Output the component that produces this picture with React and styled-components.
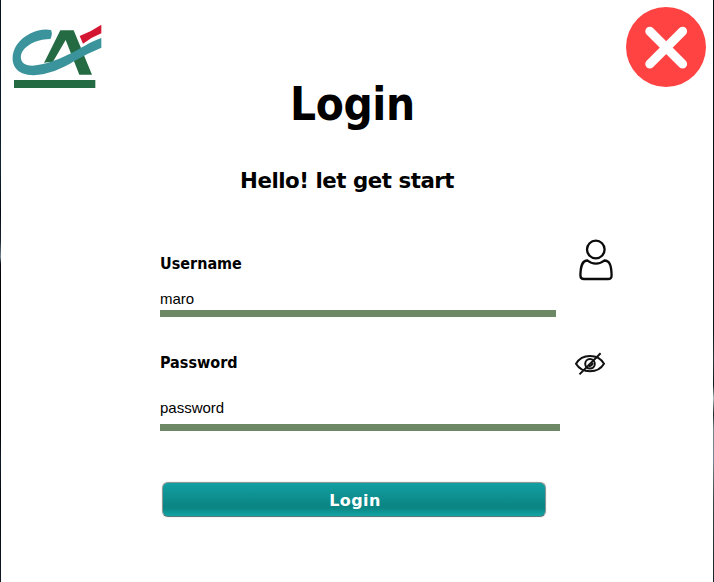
import React from "react";
import styled, { createGlobalStyle } from "styled-components";

const GlobalStyle = createGlobalStyle`
  *, *::before, *::after { box-sizing: border-box; }
  body { margin: 0; background: #fff; color: #000; overflow: hidden; }
`;

const Window = styled.main`
  width: 714px;
  height: 582px;
  display: grid;
  grid-template-columns: 1px 1fr 1px;
  background: #fff;
`;

const Edge = styled.div`
  background: ${(p) => p.$fill};
`;

const Content = styled.div`
  display: flex;
  flex-direction: column;
  min-width: 0;
`;

const Header = styled.header`
  height: 150px;
  display: grid;
  grid-template-columns: 255px 1fr 255px;
`;

const Logo = styled.svg`
  display: block;
  margin: 24px 0 0 11px;
`;

const CloseButton = styled.button`
  justify-self: end;
  width: 80px;
  height: 80px;
  margin: 7px 7px 0 0;
  padding: 0;
  border: 0;
  background: none;
  svg { display: block; }
`;

const Heading = styled.h1`
  margin: 77px 0 0 34px;
  font: bold 45.5px/56px "DejaVu Sans Condensed", "DejaVu Sans", sans-serif;
  font-stretch: condensed;
  letter-spacing: -0.4px;
  white-space: nowrap;
`;

const Greeting = styled.h2`
  margin: 16px 0 0 239px;
  font: bold 21.33px/30px "DejaVu Sans", sans-serif;
  letter-spacing: -0.47px;
  white-space: nowrap;
`;

const Form = styled.form`
  display: flex;
  flex-direction: column;
  padding-left: 159px;
`;

const Field = styled.div`
  display: grid;
  grid-template-columns: 400px 60px;
  column-gap: 10px;
  height: ${(p) => p.$height}px;
  margin-top: ${(p) => p.$top}px;
`;

const FieldBody = styled.div`
  display: flex;
  flex-direction: column;
  padding-top: ${(p) => p.$inset}px;
`;

const Label = styled.label`
  font: bold 16px/20px "DejaVu Sans Condensed", "DejaVu Sans", sans-serif;
  font-stretch: condensed;
`;

const Input = styled.input`
  display: block;
  width: ${(p) => p.$width}px;
  height: 18px;
  margin: ${(p) => p.$top}px 0 0;
  padding: 0;
  border: 0;
  outline: 0;
  color: #000;
  background: transparent;
  font: 15px/18px "Liberation Sans", Arial, sans-serif;
`;

const Underline = styled.div`
  width: ${(p) => p.$width}px;
  height: 7px;
  margin-top: ${(p) => p.$top}px;
  background: #6d8865;
`;

const FieldIcon = styled.svg`
  display: block;
  margin-left: ${(p) => p.$left}px;
`;

const SubmitButton = styled.button`
  width: 384px;
  height: 35px;
  margin: 51px 0 0 2px;
  padding: 2px 0 0 2px;
  border: 1px solid #8b9898;
  border-bottom-color: #56797a;
  border-radius: 6px;
  box-shadow: 0 0 1px #999;
  background: linear-gradient(#13a0a2 0%, #0b8585 68%, #0a8785 76%, #12a5a6 100%);
  color: #fff;
  font: bold 16px/32px "DejaVu Sans", sans-serif;
  letter-spacing: 0.4px;
`;

const leftEdge =
  "linear-gradient(#07111d 0, #0b1a2b 130px, #122638 165px, #040a13 210px, #17212d 240px, #728292 257px, #05080e 264px, #000 300px, #000 430px, #101c2a 460px, #03070d 500px, #101924 582px)";
const rightEdge =
  "linear-gradient(#020a12 0, #08131c 330px, #263640 360px, #0c1820 385px, #aabbc4 398px, #17252e 414px, #71838d 428px, #758792 460px, #34434e 500px, #17222c 582px)";

function BankLogo() {
  return (
    <Logo width="90" height="65" viewBox="36 42 270 195" aria-label="CA">
      <path fill="#246b43" d="M181 61H221L276 194H238L197 90L158 157Q145 155 132 159Z" />
      <path
        fill="#3b939b"
        d="M153 60C122 53 75 69 50 105C29 139 35 177 67 190C113 207 177 182 222 154C250 137 278 124 304 113V84C272 94 242 116 213 130C165 154 116 171 84 166C61 162 58 139 68 123C84 100 119 87 151 87C156 79 157 67 153 60Z"
      />
      <path fill="#d31632" d="M239 78Q275 64 304 44V70Q274 82 249 101Z" />
      <path fill="#246b43" d="M42 210H286V234H42Z" />
    </Logo>
  );
}

function CloseIcon() {
  return (
    <svg width="80" height="80" viewBox="0 0 80 80">
      <circle cx="40" cy="40" r="40" fill="#ff4343" />
      <path d="M23.8 24.2L56.6 57M56.6 24.2L23.8 57" stroke="#fff" strokeWidth="9" strokeLinecap="round" />
    </svg>
  );
}

function UserIcon() {
  return (
    <FieldIcon $left={8} width="38" height="44" viewBox="578 238 38 44" fill="none" stroke="#0b0b0b" strokeWidth="2.3">
      <circle cx="595.8" cy="249.5" r="8.8" />
      <path d="M587.5 260.5C582 260.5 580.6 266 580.4 275.5Q580.4 279 584 279H608Q611.7 279 611.6 275.5C611.4 266 610 260.5 604.3 260.5C599.5 264.6 592.3 264.6 587.5 260.5Z" />
    </FieldIcon>
  );
}

function HiddenIcon() {
  return (
    <FieldIcon $left={4} width="34" height="24" viewBox="574 352 34 24" fill="none" stroke="#111" strokeWidth="2">
      <path d="M576 363.8C582 353.4 598 353.4 604 363.8C598 373.8 582 373.8 576 363.8Z" />
      <circle cx="590" cy="363.8" r="4.8" />
      <path d="M592.7 362.8Q592 366 589 366.3" />
      <path d="M600.6 353.3L579.5 374.4" />
    </FieldIcon>
  );
}

export default function App() {
  return (
    <>
      <GlobalStyle />
      <Window>
        <Edge $fill={leftEdge} />
        <Content>
          <Header>
            <BankLogo />
            <Heading>Login</Heading>
            <CloseButton type="button" aria-label="Close">
              <CloseIcon />
            </CloseButton>
          </Header>
          <Greeting>Hello! let get start</Greeting>
          <Form>
            <Field $top={42} $height={79}>
              <FieldBody $inset={16}>
                <Label htmlFor="username">Username</Label>
                <Input id="username" defaultValue="maro" $width={396} $top={16} />
                <Underline $width={396} $top={2} />
              </FieldBody>
              <UserIcon />
            </Field>
            <Field $top={35} $height={79}>
              <FieldBody $inset={1}>
                <Label htmlFor="password">Password</Label>
                <Input id="password" defaultValue="password" $width={396} $top={26} />
                <Underline $width={400} $top={7} />
              </FieldBody>
              <HiddenIcon />
            </Field>
            <SubmitButton type="button">Login</SubmitButton>
          </Form>
        </Content>
        <Edge $fill={rightEdge} />
      </Window>
    </>
  );
}
